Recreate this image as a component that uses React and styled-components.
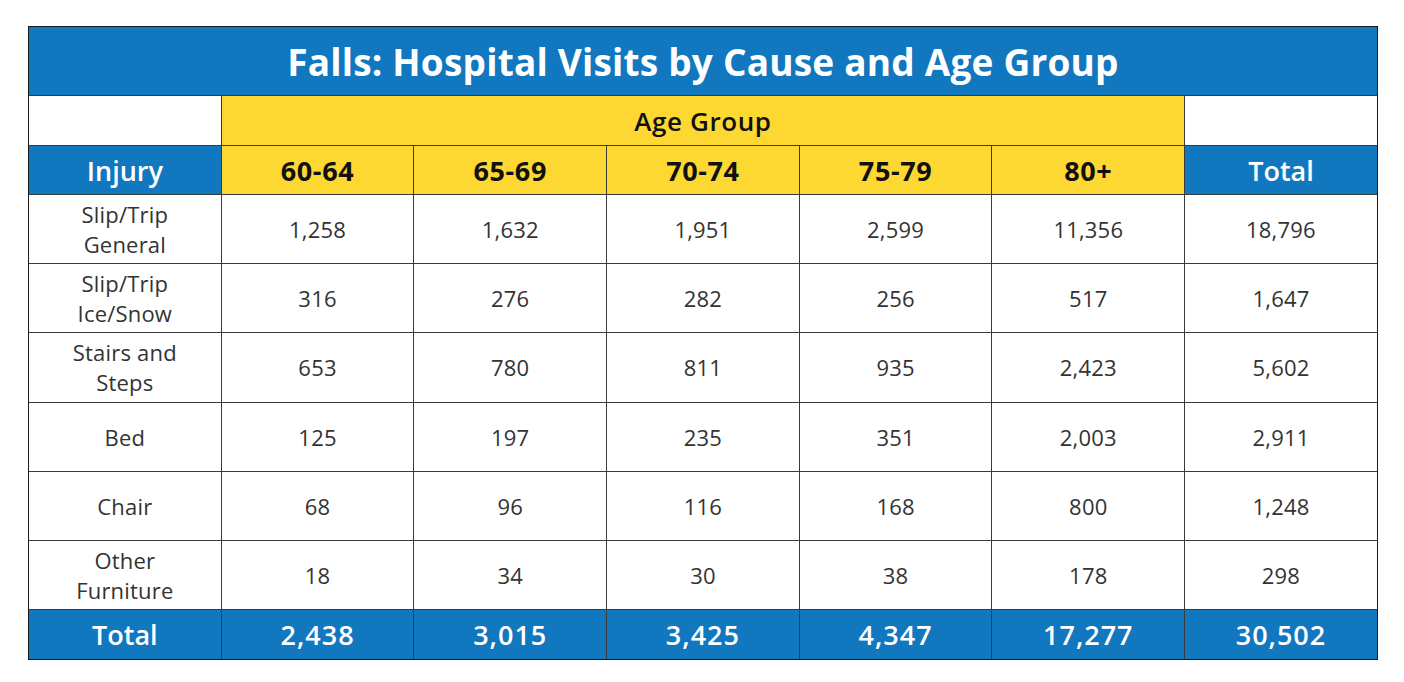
import React from "react";
import styled, { createGlobalStyle } from "styled-components";

const GlobalStyle = createGlobalStyle`
  body {
    margin: 0;
    background: #ffffff;
    font-family: "Open Sans", "Liberation Sans", sans-serif;
  }
`;

const ages = ["60-64", "65-69", "70-74", "75-79", "80+"];

const rows = [
  { label: ["Slip/Trip", "General"], values: ["1,258", "1,632", "1,951", "2,599", "11,356"], total: "18,796" },
  { label: ["Slip/Trip", "Ice/Snow"], values: ["316", "276", "282", "256", "517"], total: "1,647" },
  { label: ["Stairs and", "Steps"], values: ["653", "780", "811", "935", "2,423"], total: "5,602" },
  { label: ["Bed"], values: ["125", "197", "235", "351", "2,003"], total: "2,911" },
  { label: ["Chair"], values: ["68", "96", "116", "168", "800"], total: "1,248" },
  { label: ["Other", "Furniture"], values: ["18", "34", "30", "38", "178"], total: "298" },
];

const totals = ["2,438", "3,015", "3,425", "4,347", "17,277"];

const App = () => {
  return (
    <>
      <GlobalStyle />
      <Page>
        <Table>
          <Title>Falls: Hospital Visits by Cause and Age Group</Title>

          <Cell $bg="#ffffff" />
          <AgeBand>Age Group</AgeBand>
          <Cell $bg="#ffffff" />

          <HeadCell $bg="#1177bf" $color="#ffffff" $weight={600}>Injury</HeadCell>
          {ages.map((a) => (
            <HeadCell key={a} $bg="#fdd732" $color="#111111" $weight={700} $spacing={0.6}>{a}</HeadCell>
          ))}
          <HeadCell $bg="#1177bf" $color="#ffffff" $weight={600}>Total</HeadCell>

          {rows.map((r) => (
            <React.Fragment key={r.label.join(" ")}>
              <DataCell>
                <span>
                  {r.label.map((l) => (
                    <Line key={l}>{l}</Line>
                  ))}
                </span>
              </DataCell>
              {r.values.map((v, i) => (
                <DataCell key={i}>{v}</DataCell>
              ))}
              <DataCell>{r.total}</DataCell>
            </React.Fragment>
          ))}

          <TotalCell>Total</TotalCell>
          {totals.map((t, i) => (
            <TotalCell key={i} $spacing={1}>{t}</TotalCell>
          ))}
          <TotalCell $spacing={1}>30,502</TotalCell>
        </Table>
      </Page>
    </>
  );
};

const Page = styled.div`
  padding: 26px 0 0 28px;
`;

const Table = styled.div`
  display: grid;
  grid-template-columns: repeat(7, 191.7px);
  grid-template-rows: 68px 49px 48px repeat(6, 68.2px) 49px;
  gap: 1px;
  width: max-content;
  background: #3a3a3a;
  border: 1px solid #1a1a1a;
`;

const Title = styled.div`
  grid-column: 1 / -1;
  display: flex;
  align-items: center;
  justify-content: center;
  background: #1177bf;
  color: #ffffff;
  font-size: 37px;
  font-weight: 700;
  letter-spacing: 0.2px;
`;

const Cell = styled.div`
  background: ${(p) => p.$bg};
`;

const AgeBand = styled.div`
  grid-column: 2 / 7;
  display: flex;
  align-items: center;
  justify-content: center;
  background: #fdd732;
  color: #111111;
  font-size: 26px;
  font-weight: 600;
  letter-spacing: 0.6px;
`;

const HeadCell = styled.div`
  display: flex;
  align-items: center;
  justify-content: center;
  background: ${(p) => p.$bg};
  color: ${(p) => p.$color};
  font-size: 27px;
  font-weight: ${(p) => p.$weight};
  letter-spacing: ${(p) => p.$spacing || 0}px;
`;

const DataCell = styled.div`
  display: flex;
  align-items: center;
  justify-content: center;
  text-align: center;
  background: #ffffff;
  color: #333333;
  font-size: 22px;
  line-height: 30px;
  letter-spacing: 0.2px;
`;

const Line = styled.div``;

const TotalCell = styled.div`
  display: flex;
  align-items: center;
  justify-content: center;
  background: #1177bf;
  color: #ffffff;
  font-size: 27px;
  font-weight: 600;
  letter-spacing: ${(p) => p.$spacing || 0}px;
`;

export default App;
